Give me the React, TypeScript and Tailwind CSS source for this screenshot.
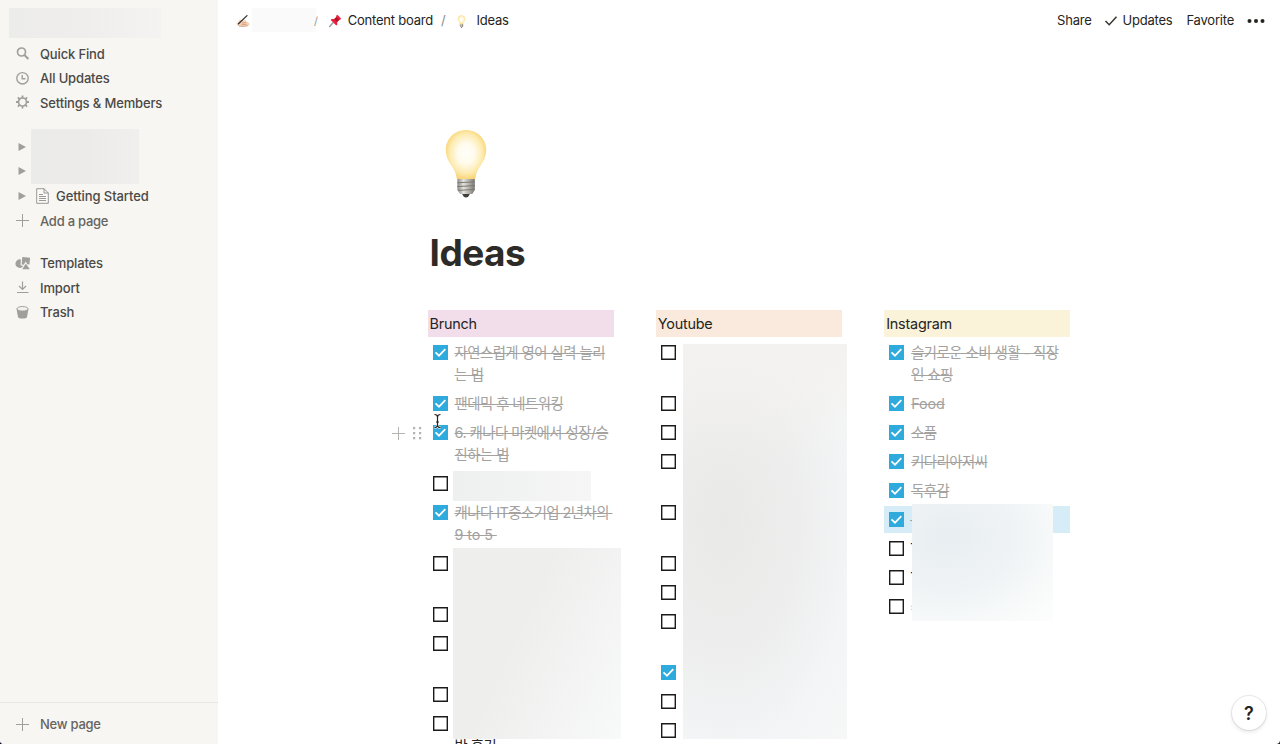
import type { ReactNode } from "react";
import clsx from "clsx";

type Todo = {
  done?: boolean;
  lines?: string[];
  // number of text lines taken by an item whose text is covered
  rows?: 1 | 2;
  highlight?: boolean;
  handles?: boolean;
  peek?: string;
};

const brunch: Todo[] = [
  { done: true, lines: ["자연스럽게 영어 실력 늘리", "는 법"] },
  { done: true, lines: ["팬데믹 후 네트워킹"] },
  { done: true, lines: ["6. 캐나다 마켓에서 성장/승", "진하는 법"], handles: true },
  { rows: 1 },
  { done: true, lines: ["캐나다 IT중소기업 2년차의\u00a0", "9 to 5\u00a0"] },
  { rows: 2 },
  { rows: 1 },
  { rows: 2 },
  { rows: 1 },
  { lines: ["\u00a0", "반 후기"] },
];

const youtube: Todo[] = [
  { rows: 2 },
  { rows: 1 },
  { rows: 1 },
  { rows: 2 },
  { rows: 2 },
  { rows: 1 },
  { rows: 1 },
  { rows: 2 },
  { rows: 1, done: true },
  { rows: 1 },
  { rows: 1 },
];

const instagram: Todo[] = [
  { done: true, lines: ["슬기로운 소비 생활 - 직장", "인 쇼핑"] },
  { done: true, lines: ["Food"] },
  { done: true, lines: ["소품"] },
  { done: true, lines: ["키다리아저씨"] },
  { done: true, lines: ["독후감"] },
  { rows: 1, done: true, highlight: true, peek: "-" },
  { rows: 1, peek: "T" },
  { rows: 1, peek: "T" },
  { rows: 1, peek: "=" },
];

function Bulb({ className }: { className?: string }) {
  return (
    <svg viewBox="0 0 42 70" className={className}>
      <defs>
        <radialGradient id="glass" cx="0.5" cy="0.48" r="0.56">
          <stop offset="0" stopColor="#fffefa" />
          <stop offset="0.38" stopColor="#fffbec" />
          <stop offset="0.72" stopColor="#fdebb0" />
          <stop offset="1" stopColor="#f8cf68" />
        </radialGradient>
        <linearGradient id="screw" x1="0" x2="1">
          <stop offset="0" stopColor="#8b8984" />
          <stop offset="0.35" stopColor="#e5e3dd" />
          <stop offset="0.65" stopColor="#b5b2ac" />
          <stop offset="1" stopColor="#787670" />
        </linearGradient>
      </defs>
      <path d="M16 63h10l-2.600 4.500q-2.400 2-4.800 0Z" fill="#403f3d" />
      <path d="M12.400 49h17.400v12l-2.500 4H15l-2.600-4Z" fill="url(#screw)" />
      <path d="M12.200 53.800l17.800-1M12.200 57.600l17.800-1M13 61.400l16.600-1" stroke="#7b7973" strokeWidth="1" />
      <path
        d="M21 1C9.600 1 .8 9.800 .8 21c0 6.600 2.600 10.800 5.600 15.400 2.700 4.100 4.600 7.200 5.100 12.100q.2 1.500 1.700 1.500h15.600q1.500 0 1.700-1.500c.5-4.900 2.400-8 5.100-12.100 3-4.600 5.600-8.800 5.600-15.400C41.200 9.800 32.400 1 21 1Z"
        fill="url(#glass)"
      />
    </svg>
  );
}

function WritingHand() {
  return (
    <svg viewBox="0 0 14 14" className="h-3.5 w-3.5">
      <path d="M.5 9.800 3.500 6Q5 5 6.300 6.800L9 6q1.300 0 .9 1.300l3 1.700q1.200 1.500-.1 2.600-4.300 1.800-8.500.7Q.5 12.300.5 9.800Z" fill="#f6cfb5" />
      <path d="M6 9.200l4-.7M5.500 10.800l5-.5M3 12.300q4 .8 9-.6" stroke="#bc8a6c" strokeWidth=".6" fill="none" />
      <path d="M2.500 9.800 11 1.600" stroke="#30302f" strokeWidth="1.300" strokeLinecap="round" />
    </svg>
  );
}

function Pushpin() {
  return (
    <svg viewBox="0 0 14 14" className="h-3.5 w-3.5">
      <path d="M5.200 8.500 1.300 13" stroke="#8b9aa6" strokeWidth="1.300" />
      <path d="M8.200 1.500 9.700 1l3.300 3.500-.6 1.300-1.200.2-2 2 .1 2.500-1 .9L2.700 5.900l1-1 2.500.1 2-2Z" fill="#e8203a" />
      <path d="M8.400 3.200 11 6 9 8 6.200 5.200Z" fill="#b50f2b" />
    </svg>
  );
}

function SidebarRow({ icon, children, light }: { icon: ReactNode; children: ReactNode; light?: boolean }) {
  return (
    <div className="flex h-[24.500px] items-center pl-[15px]">
      <span className="flex w-[25px] shrink-0 items-center text-[#a19f9b]">{icon}</span>
      <span
        className={clsx(
          "pt-0.5 text-[13px] font-medium",
          light ? "tracking-[-0.250px] text-[#66645f]" : "tracking-[-0.150px] text-[#4b4945]",
        )}
      >
        {children}
      </span>
    </div>
  );
}

function Plus({ className }: { className?: string }) {
  return (
    <svg viewBox="0 0 14 14" className={clsx("h-3.5 w-3.5", className)} fill="none" stroke="currentColor">
      <path d="M7.500 1v13M1 7.500h13" />
    </svg>
  );
}

function Triangle() {
  return (
    <svg viewBox="0 0 8 8" className="ml-[3px] h-2 w-2" fill="#a19f9b">
      <path d="M.5 0 8 4 .5 8Z" />
    </svg>
  );
}

function Sidebar() {
  return (
    <aside className="flex h-full w-[218px] shrink-0 flex-col bg-[#f7f6f3]">
      <div className="mt-2 ml-[9px] h-[30px] w-[152px] bg-linear-to-r from-[#ececeb] via-[#efeeed] to-[#f4f3f1]" />
      <div className="mt-[3px]">
        <SidebarRow
          icon={
            <svg viewBox="0 0 14 14" className="ml-px h-3.5 w-3.5" fill="none" stroke="currentColor" strokeWidth="1.700">
              <circle cx="5.500" cy="6" r="4" />
              <path d="m8.400 9 4 4" strokeWidth="2" />
            </svg>
          }
        >
          Quick Find
        </SidebarRow>
        <SidebarRow
          icon={
            <svg viewBox="0 0 14 14" className="h-3.5 w-3.5" fill="none" stroke="currentColor" strokeWidth="1.400">
              <circle cx="7.500" cy="7.300" r="5.700" />
              <path d="M7.200 4v3.800h3.300" />
            </svg>
          }
        >
          All Updates
        </SidebarRow>
        <SidebarRow
          icon={
            <svg viewBox="0 0 14 14" className="h-3.5 w-3.5" fill="none" stroke="currentColor">
              <circle cx="7.500" cy="7" r="4" strokeWidth="1.700" />
              <path
                d="M7.500 .5v2.500M7.500 11v2.500M1 7h2.500M11.500 7H14M2.900 2.400l1.800 1.800M10.300 9.800l1.800 1.800M2.900 11.600l1.800-1.800M10.300 4.200l1.800-1.800"
                strokeWidth="1.800"
              />
            </svg>
          }
        >
          Settings &amp; Members
        </SidebarRow>
      </div>

      <div className="mt-5">
        <div className="flex">
          <div className="w-[31px] pl-[15px]">
            <div className="flex h-[24.500px] items-center">
              <Triangle />
            </div>
            <div className="flex h-[24.500px] items-center">
              <Triangle />
            </div>
          </div>
          <div className="-mt-1.5 h-[55px] w-[108px] bg-linear-to-r from-[#ebebe9] via-[#ecebe9] to-[#f0efed]" />
        </div>
        <div className="flex h-[24.500px] items-center pl-[15px]">
          <Triangle />
          <svg viewBox="0 0 13 16" className="ml-[10px] h-4 w-[13px]" fill="#fafaf8" stroke="#8f8d89" strokeWidth=".9">
            <path d="M.7.700h7.300L12.300 5v10.300H.7ZM8 .7V5h4.300" />
            <path d="M3 6.500h4M3 8.500h7M3 10.500h7M3 12.500h7" />
          </svg>
          <span className="ml-[7px] pt-0.5 text-[13px] font-medium tracking-[-0.080px] text-[#4b4945]">Getting Started</span>
        </div>
        <SidebarRow light icon={<Plus />}>
          Add a page
        </SidebarRow>
      </div>

      <div className="mt-[18px]">
        <SidebarRow
          icon={
            <svg viewBox="0 0 16 14" className="h-3.5 w-4" fill="currentColor">
              <path d="m7.300 1 7.800.8-.7 6.700-2-.2-1.700-2.700-2 3.200-2-.3Z" />
              <path d="M5.900 3.600A4.200 4.200 0 1 0 8.200 10L5.500 9.300Z" />
              <path d="m10.800 7.500 4 5.700H7.200Z" />
            </svg>
          }
        >
          Templates
        </SidebarRow>
        <SidebarRow
          icon={
            <svg viewBox="0 0 14 14" className="h-3.5 w-3.5" fill="none" stroke="currentColor" strokeWidth="1.200">
              <path d="M7.500 1.500v7.800M4 6l3.500 3.500L11 6M2 12.500h11.500" />
            </svg>
          }
        >
          Import
        </SidebarRow>
        <SidebarRow
          icon={
            <svg viewBox="0 0 14 14" className="h-3.5 w-3.5" fill="currentColor">
              <path d="M1.500 3.800 3 12q.4 1.600 4.500 1.600T12 12l1.500-8.200Z" />
              <ellipse cx="7.500" cy="3.800" rx="5.500" ry="2.300" fill="#f2f1ee" stroke="currentColor" />
            </svg>
          }
        >
          Trash
        </SidebarRow>
      </div>

      <div className="mt-auto flex h-[42px] flex-col justify-center border-t border-[#e7e6e3]">
        <SidebarRow light icon={<Plus />}>
          New page
        </SidebarRow>
      </div>
    </aside>
  );
}

function TopBar() {
  return (
    <header className="flex h-[42px] shrink-0 items-center pr-[15px] pl-[18px] text-[13px] tracking-[-0.220px] text-[#252422]">
      <WritingHand />
      <div className="-mt-0.5 ml-0.5 h-6 w-16 bg-[#fafafa]" />
      <span className="-ml-0.5 text-[11px] text-[#9b9a97]">/</span>
      <span className="ml-[10px]">
        <Pushpin />
      </span>
      <span className="ml-[6px]">Content board</span>
      <span className="ml-[8px] text-[#8c8b88]">/</span>
      <Bulb className="ml-[12px] h-[13px] w-[9px]" />
      <span className="ml-[10px]">Ideas</span>

      <span className="ml-auto">Share</span>
      <svg viewBox="0 0 14 12" className="ml-3 h-3 w-3.5" fill="none" stroke="#37352f" strokeWidth="1.500">
        <path d="m1.500 6 3.700 3.700L12.500 1.700" />
      </svg>
      <span className="ml-[5px]">Updates</span>
      <span className="ml-[14px]">Favorite</span>
      <svg viewBox="0 0 18 4" className="ml-[13px] h-1 w-[18px]" fill="#252422">
        <circle cx="2.500" cy="2" r="2" />
        <circle cx="9" cy="2" r="2" />
        <circle cx="15.500" cy="2" r="2" />
      </svg>
    </header>
  );
}

function Checkbox({ done }: { done?: boolean }) {
  return (
    <svg viewBox="0 0 15 15" className="mt-1.5 h-[15px] w-[15px] shrink-0" fill="none">
      {done ? (
        <>
          <path d="M0 0h15v15H0Z" fill="#2eaadc" />
          <path d="m2.500 7.300 3.500 3.400 6.300-6.500" stroke="#fff" strokeWidth="1.700" />
        </>
      ) : (
        <path d="M.7.700h13.600v13.600H.7Z" fill="#fff" stroke="#1c1b19" strokeWidth="1.400" />
      )}
    </svg>
  );
}

function TodoRow({ todo }: { todo: Todo }) {
  const twoLines = todo.rows === 2 || todo.lines?.length === 2;
  return (
    <div
      className={clsx(
        "relative flex shrink-0 pl-[5px]",
        twoLines ? "h-[49px]" : "h-[27px]",
        todo.highlight && "bg-[#d6edf7]",
      )}
    >
      {todo.handles && (
        <div className="absolute top-[7px] -left-[37px] flex items-center text-[#b4b3b0]">
          <Plus />
          <svg viewBox="0 0 9 13" className="ml-[8px] h-[13px] w-[9px]" fill="currentColor">
            <path d="M0 0h2.200v2.200H0ZM6 0h2.200v2.200H6ZM0 5h2.200v2.200H0ZM6 5h2.200v2.200H6ZM0 10h2.200v2.200H0ZM6 10h2.200v2.200H6Z" />
          </svg>
        </div>
      )}
      <Checkbox done={todo.done} />
      <div
        className={clsx(
          "ml-[7px] pt-[3px] text-[14.400px] leading-[22px] whitespace-nowrap",
          todo.done ? "text-[#a3a29f] line-through" : "text-[#252422]",
        )}
      >
        {todo.lines?.map((line) => (
          <div key={line} className={/[가-힣]/.test(line) ? "tracking-[-0.530px]" : "tracking-[-0.100px]"}>
            {line}
          </div>
        ))}
        {todo.peek && <div className="-ml-px">{todo.peek}</div>}
      </div>
    </div>
  );
}

function Column({ title, color, todos, children }: { title: string; color: string; todos: Todo[]; children: ReactNode }) {
  return (
    <section className="relative flex min-w-0 flex-col gap-0.5">
      <h2 className={clsx("h-[27px] shrink-0 pl-0.5 text-[14.400px] leading-[28px] tracking-[-0.220px] text-[#252422]", color)}>
        {title}
      </h2>
      {todos.map((t, i) => (
        <TodoRow key={i} todo={t} />
      ))}
      {children}
    </section>
  );
}

export default function App() {
  return (
    <div className="h-[744px] w-[1280px] overflow-hidden bg-[#11112a]">
      <div className="flex h-full overflow-hidden rounded-b-[4px] bg-white font-['Inter','Noto_Sans_CJK_KR',sans-serif]">
        <Sidebar />
        <main className="relative flex min-w-0 flex-1 flex-col">
          <TopBar />
          <div className="min-h-0 flex-1 pl-[209.500px]">
            <Bulb className="mt-[87px] ml-[17px] h-[70px] w-[42px]" />
            <h1 className="mt-[32px] pl-0.5 text-[37px] leading-[44px] font-bold tracking-[-0.500px] text-[#2d2b27]">Ideas</h1>
            <div className="mt-[35px] grid w-[643px] grid-cols-3 items-start gap-x-[42px]">
              <Column title="Brunch" color="bg-[#f2deeb]" todos={brunch}>
                <div className="absolute top-[161px] left-[25.500px] h-[30px] w-[138px] bg-linear-to-r from-[#eeefef] to-[#f6f6f6]" />
                <div className="absolute top-[238px] left-[25.500px] h-[191px] w-[168px] bg-linear-[115deg] from-[#eeeeed] via-[#eeeeed] via-40% to-[#f8f9f9]" />
                <svg viewBox="0 0 9 16" className="absolute top-[103px] left-[5px] h-4 w-[9px]" fill="none">
                  <path d="M1.500 1.500Q4.500 1.500 4.500 4v8q0 2.500-3 2.500M7.500 1.500q-3 0-3 2.500v8q0 2.500 3 2.500M3 9h3" stroke="#fff" strokeWidth="2.500" />
                  <path d="M1.500 1.500Q4.500 1.500 4.500 4v8q0 2.500-3 2.500M7.500 1.500q-3 0-3 2.500v8q0 2.500 3 2.500M3 9h3" stroke="#222" strokeWidth="1.200" />
                </svg>
              </Column>
              <Column title="Youtube" color="bg-[#faeadd]" todos={youtube}>
                <div className="absolute top-[34px] left-[27.200px] h-[395px] w-[164px] bg-[linear-gradient(to_bottom,#f4f2f0_0%,transparent_30%),radial-gradient(ellipse_at_25%_45%,#e9e9e8_0%,#eeeeee_45%,#f3f5f6_75%,#f7f7f7_100%)]" />
              </Column>
              <Column title="Instagram" color="bg-[#fbf2da]" todos={instagram}>
                <div className="absolute top-[194px] left-[28px] h-[117px] w-[141px] bg-[radial-gradient(ellipse_at_25%_28%,#e8eef1_0%,#eff3f5_45%,#f8fafa_75%,#fdfdfd_100%)]" />
              </Column>
            </div>
          </div>
          <div className="absolute right-[14px] bottom-[14px] flex h-[34px] w-[34px] items-center justify-center rounded-full bg-white text-[18px] font-semibold text-[#252422] shadow-[0_0_0_1px_rgba(15,15,15,0.08),0_2px_4px_rgba(15,15,15,0.1)]">
            ?
          </div>
        </main>
      </div>
    </div>
  );
}
